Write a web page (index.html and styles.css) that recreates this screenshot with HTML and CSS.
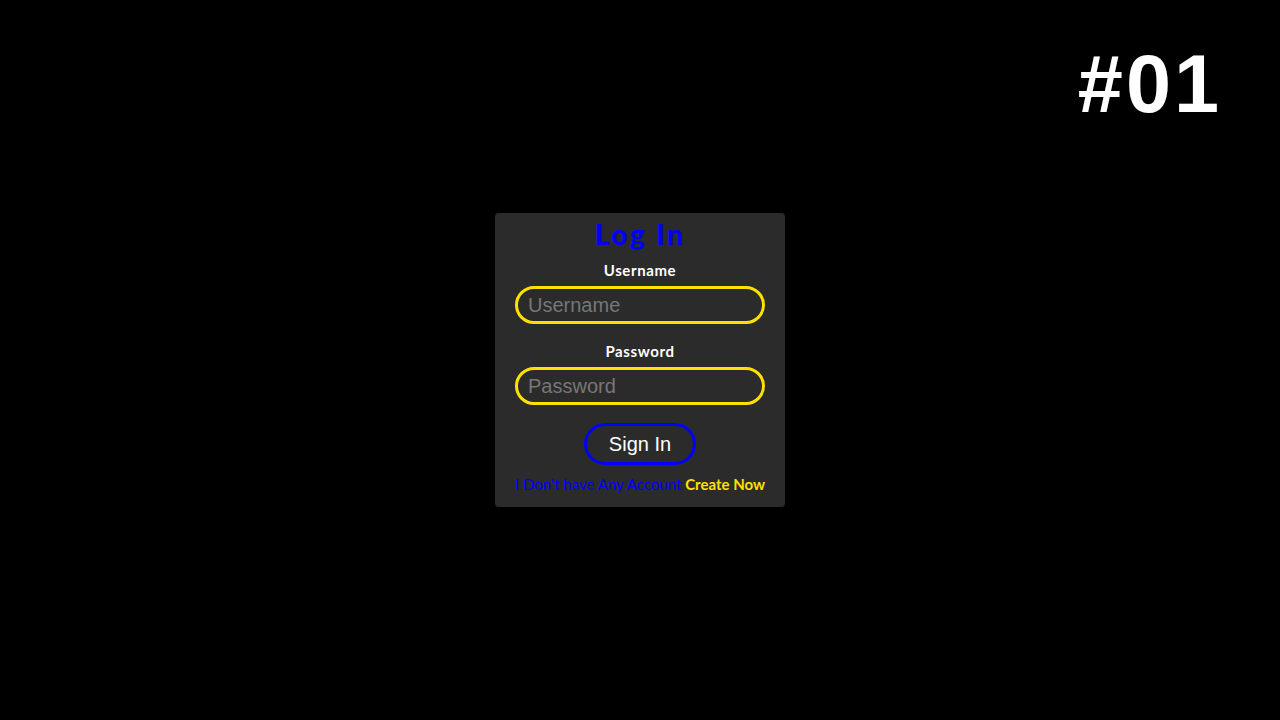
FILE: index.html
```html
<!DOCTYPE html>
<html>
<head>
<meta charset="utf-8">
<link rel="stylesheet" href="styles.css">
</head>
<body>
<div class="badge">#01</div>
<form class="card">
  <h1 class="title">Log In</h1>
  <label class="label">Username</label>
  <input class="field" type="text" placeholder="Username">
  <label class="label label-gap">Password</label>
  <input class="field" type="password" placeholder="Password">
  <button class="btn" type="button">Sign In</button>
  <p class="note"><span class="note-q">I Don't have Any Account</span> <span class="note-a">Create Now</span></p>
</form>
</body>
</html>
```
FILE: styles.css
```css
html, body {
  margin: 0;
  padding: 0;
  background: #000;
  height: 100%;
}
body {
  display: flex;
  align-items: center;
  justify-content: center;
  font-family: "Lato", "Open Sans", sans-serif;
}
.badge {
  position: absolute;
  top: 40px;
  right: 58px;
  color: #fff;
  font-family: "Liberation Sans", Arial, sans-serif;
  font-weight: bold;
  font-size: 81px;
  letter-spacing: 3px;
  line-height: 1.1;
}
.card {
  height: 294px;
  box-sizing: border-box;
  padding: 2px 20px 0;
  width: 290px;
  background: #2b2b2b;
  border-radius: 4px;
  display: flex;
  flex-direction: column;
  align-items: center;
}
.title {
  margin: 0;
  color: #0000ff;
  font-size: 28px;
  font-weight: 900;
  letter-spacing: 2.5px;
  line-height: 38px;
}
.label {
  color: #fff;
  font-size: 15px;
  font-weight: bold;
  letter-spacing: 0.6px;
  line-height: 18px;
  margin-top: 8px;
}
.label-gap {
  margin-top: 18px;
}
.field {
  margin-top: 7px;
  width: 250px;
  height: 38px;
  box-sizing: border-box;
  border: 3px solid #ffe000;
  border-radius: 19px;
  background: transparent;
  padding: 0 10px;
  font-family: "Liberation Sans", Arial, sans-serif;
  font-size: 20px;
  color: #fff;
  outline: none;
}
.field::placeholder {
  color: #777;
}
.btn {
  margin-top: 18px;
  width: 112px;
  height: 42px;
  box-sizing: border-box;
  border: 3px solid #0000ff;
  border-radius: 21px;
  background: transparent;
  color: #fff;
  font-family: "Liberation Sans", Arial, sans-serif;
  font-size: 20px;
}
.note {
  margin: 10px 0 0;
  font-size: 15px;
  line-height: 18px;
  white-space: nowrap;
}
.note-q {
  color: #0000ff;
}
.note-a {
  color: #ffe000;
  font-weight: bold;
}
```
